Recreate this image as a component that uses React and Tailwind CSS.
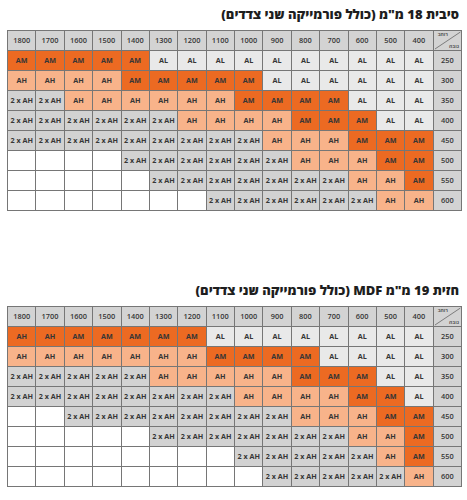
import React from 'react';

const widths = [1800, 1700, 1600, 1500, 1400, 1300, 1200, 1100, 1000, 900, 800, 700, 600, 500, 400];
const heights = [250, 300, 350, 400, 450, 500, 550, 600];

const cellStyles = {
  M: { cls: 'bg-[#ec6a22]', text: 'AM' },
  A: { cls: 'bg-[#ec6a22]', text: 'AH' },
  H: { cls: 'bg-[#f8b38a]', text: 'AH' },
  L: { cls: 'bg-[#e9e9e9]', text: 'AL' },
  X: { cls: 'bg-[#d2d2d2]', text: '2 x AH' },
  _: { cls: 'bg-white', text: '' },
};

const tables = [
  {
    title: 'סיבית 18 מ"מ (כולל פורמייקה שני צדדים)',
    rows: [
      'MMMMMLLLLLLLLLL',
      'HHHHMMMMMLLLLLL',
      'XXHHHHHHMMMMLLL',
      'XXXXXXHHHHMMMLL',
      'XXXXXXXXXHHHMMM',
      '____XXXXXXHHHMM',
      '_____XXXXXXXHHM',
      '_______XXXXXXHH',
    ],
  },
  {
    title: 'חזית 19 מ"מ MDF (כולל פורמייקה שני צדדים)',
    rows: [
      'AAMMMMMLLLLLLLL',
      'HHHHHHHMMMMLLLL',
      'XXXXXHHHHHMMMLL',
      'XXXXXXXXHHHHMML',
      '__XXXXXXXXHHHMM',
      '_____XXXXXXXHHM',
      '________XXXXXHM',
      '_________XXXXXH',
    ],
  },
];

const CornerCell = () => (
  <div className="relative bg-[#d3d3d3] overflow-hidden">
    <svg className="absolute inset-0 w-full h-full" viewBox="0 0 28 19" preserveAspectRatio="none">
      <line x1="1" y1="18" x2="27" y2="1" stroke="#555" strokeWidth="0.7" />
    </svg>
    <span className="absolute left-[4px] top-[1px] text-[5px] leading-none text-[#555]">רוחב</span>
    <span className="absolute right-[2px] bottom-[1px] text-[5px] leading-none text-[#555]">גובה</span>
  </div>
);

const PriceTable = ({ title, rows, className }) => (
  <div className={className}>
    <h2 dir="rtl" className="h-[20px] text-[13px] leading-[20px] font-extrabold text-[#1e1e1e] text-right pr-[1px] mb-[6px]">
      {title}
    </h2>
    <div className="w-[455px] grid grid-cols-[repeat(16,minmax(0,1fr))] auto-rows-[19px] gap-px bg-[#767676] border border-[#767676] text-[7.2px] font-bold text-[#363636]">
      {widths.map((w) => (
        <div key={w} className="bg-[#d3d3d3] flex items-center justify-center text-[7.4px] font-semibold">
          {w}
        </div>
      ))}
      <CornerCell />
      {rows.map((row, i) => (
        <React.Fragment key={i}>
          {row.split('').map((c, j) => (
            <div key={j} className={`${cellStyles[c].cls} flex items-center justify-center whitespace-nowrap`}>
              {cellStyles[c].text}
            </div>
          ))}
          <div className="bg-[#d3d3d3] flex items-center justify-center text-[7.4px] font-semibold">{heights[i]}</div>
        </React.Fragment>
      ))}
    </div>
  </div>
);

export default function App() {
  return (
    <div className="w-[467px] h-[500px] bg-white px-[7px] pt-[4px] font-['Open_Sans','Liberation_Sans',sans-serif]">
      <PriceTable {...tables[0]} />
      <PriceTable {...tables[1]} className="mt-[69px]" />
    </div>
  );
}
